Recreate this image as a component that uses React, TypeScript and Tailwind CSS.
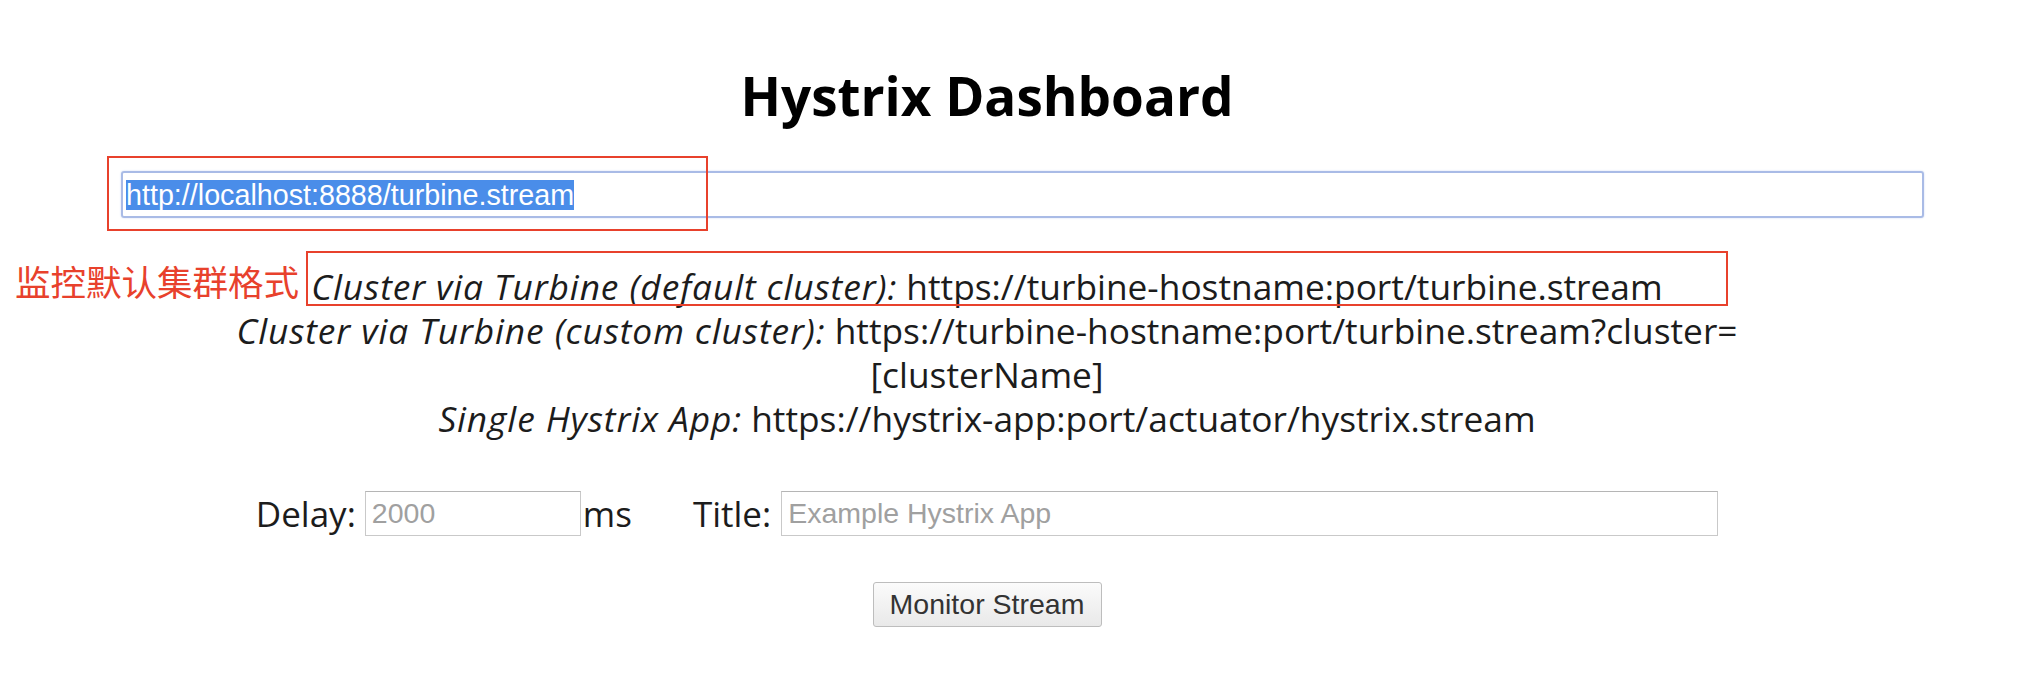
export default function App() {
  return (
    <div className="relative w-[2022px] h-[674px] overflow-hidden bg-white font-['Open_Sans',sans-serif] text-[#1c1c1c]">
      {/* page body, zoomed hystrix index */}
      <div className="ml-[127px] w-[1720px] pt-[64px] text-center">
        <h2 className="text-[53px] leading-[64px] font-bold text-black">
          Hystrix Dashboard
        </h2>

        {/* stream url field with selected text */}
        <div className="mt-[43px] -ml-[6px] flex h-[47px] w-[1803px] items-center rounded-[3px] border-2 border-[#a9bbe6] px-[3px] text-left shadow-[0_0_2px_#c9d6f2]">
          <span className="bg-[#4a8de9] font-['Liberation_Sans',Arial,sans-serif] text-[28.7px] leading-[30px] text-white">
            http://localhost:8888/turbine.stream
          </span>
        </div>

        {/* hints */}
        <div className="mt-[46px] text-[35.3px] leading-[44px]">
          <i className="tracking-[0.9px]">Cluster via Turbine (default cluster):</i>{" "}
          https://turbine-hostname:port/turbine.stream
          <br />
          <i className="tracking-[0.9px]">Cluster via Turbine (custom cluster):</i>{" "}
          https://turbine-hostname:port/turbine.stream?cluster=
          <br />
          [clusterName]
          <br />
          <i className="tracking-[0.9px]">Single Hystrix App:</i>{" "}
          https://hystrix-app:port/actuator/hystrix.stream
        </div>

        {/* delay + title */}
        <div className="mt-[51px] flex items-center justify-center text-[35px] leading-[45px]">
          <span>Delay:</span>
          <input
            readOnly
            placeholder="2000"
            className="ml-[9px] h-[45px] w-[216px] border border-[#c9c9c9] border-t-[#b5b5b5] bg-white px-[6px] font-['Liberation_Sans',Arial,sans-serif] text-[28.5px] outline-none placeholder:text-[#a0a0a0]"
          />
          <span className="ml-[2px]">ms</span>
          <span className="ml-[61px]">Title:</span>
          <input
            readOnly
            placeholder="Example Hystrix App"
            className="ml-[10px] h-[45px] w-[937px] border border-[#c9c9c9] border-t-[#b5b5b5] bg-white px-[6px] font-['Liberation_Sans',Arial,sans-serif] text-[28.5px] outline-none placeholder:text-[#a0a0a0]"
          />
        </div>

        <button className="mt-[46px] h-[45px] w-[229px] rounded-[3px] border border-[#bdbdbd] bg-linear-to-b from-[#fbfbfb] to-[#e9e9e9] font-['Liberation_Sans',Arial,sans-serif] text-[28.5px] text-[#333]">
          Monitor Stream
        </button>
      </div>

      {/* red annotations */}
      <div className="absolute left-[107px] top-[156px] h-[75px] w-[601px] border-2 border-[#e8412c]" />
      <div className="absolute left-[306px] top-[251px] h-[55px] w-[1422px] border-2 border-[#e8412c]" />
      <div className="absolute left-[15px] top-[259px] font-['Noto_Sans_CJK_SC',sans-serif] text-[35.5px] leading-[44px] text-[#e8412c]">
        监控默认集群格式
      </div>
    </div>
  );
}
